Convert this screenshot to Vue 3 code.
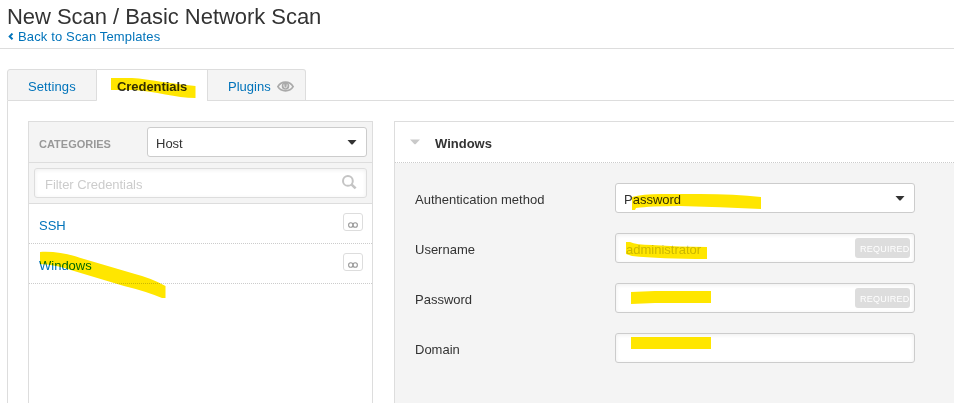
<script setup>
const categories = ['SSH', 'Windows']
const fields = [
  { label: 'Authentication method', value: 'Password', select: true },
  { label: 'Username', placeholder: 'administrator', required: true },
  { label: 'Password', required: true },
  { label: 'Domain' },
]
</script>

<template>
  <div class="page">
    <header class="header">
      <h1>New Scan / Basic Network Scan</h1>
      <a class="back">
        <svg width="6" height="8" viewBox="0 0 6 8"><path d="M4.5 0.6 L1.7 3.4 L4.5 6.2" fill="none" stroke="currentColor" stroke-width="2" /></svg>
        <span>Back to Scan Templates</span>
      </a>
    </header>

    <nav class="tabs">
      <a class="tab settings">Settings</a>
      <a class="tab active">Credentials</a>
      <a class="tab plugins">
        <span>Plugins</span>
        <svg width="18" height="12" viewBox="0 0 18 12">
          <path d="M0.9 5.6 C4.3 -0.3 12.7 -0.3 16.1 5.6 C12.7 11.2 4.3 11.2 0.9 5.6 Z" fill="none" stroke="#aaa" stroke-width="1.8" />
          <circle cx="8.5" cy="5" r="3.8" fill="#aaa" />
          <path d="M6.9 3.4V5A1.6 1.8 0 0 0 10.1 5V3.4" fill="none" stroke="#e8e8e8" stroke-width="1" />
        </svg>
      </a>
      <i class="tab-line"></i>
    </nav>

    <main class="content">
      <aside class="sidebar">
        <div class="side-head">
          <span class="side-title">CATEGORIES</span>
          <div class="control host">
            <span>Host</span>
            <svg class="caret" width="10" height="5" viewBox="0 0 10 5"><path d="M0.5 0H9.5L6 4Q5 5 4 4Z" fill="#333" /></svg>
          </div>
        </div>
        <div class="side-filter">
          <div class="control input filter">
            <span class="placeholder">Filter Credentials</span>
            <svg width="15" height="15" viewBox="0 0 15 15">
              <circle cx="5.9" cy="5.9" r="4.9" fill="none" stroke="#c4c4c4" stroke-width="2" />
              <path d="M9.4 9.4L13.6 13.4" stroke="#c4c4c4" stroke-width="2.6" />
            </svg>
          </div>
        </div>
        <div v-for="c in categories" :key="c" class="category">
          <a>{{ c }}</a>
          <span class="count">
            <svg width="10" height="6" viewBox="0 0 10 6">
              <g fill="none" stroke="#999" stroke-width="1.1"><ellipse cx="2.8" cy="3" rx="2.2" ry="2.3" /><ellipse cx="7.2" cy="3" rx="2.2" ry="2.3" /></g>
            </svg>
          </span>
        </div>
      </aside>

      <section class="details">
        <div class="details-head">
          <svg width="10" height="6" viewBox="0 0 10 6"><path d="M0 0.5H10L6 4.8Q5 5.8 4 4.8Z" fill="#c9c9c9" /></svg>
          <strong>Windows</strong>
        </div>
        <div class="form">
          <div v-for="f in fields" :key="f.label" class="row">
            <label>{{ f.label }}</label>
            <div class="control" :class="{ input: !f.select }">
              <span v-if="f.select">{{ f.value }}</span>
              <span v-else class="placeholder">{{ f.placeholder }}</span>
              <svg v-if="f.select" class="caret" width="10" height="5" viewBox="0 0 10 5"><path d="M0.5 0H9.5L6 4Q5 5 4 4Z" fill="#333" /></svg>
              <span v-if="f.required" class="required">REQUIRED</span>
            </div>
          </div>
        </div>
      </section>
    </main>

    <svg class="marks" width="954" height="403" viewBox="0 0 954 403">
      <g fill="#ffe600">
        <path d="M111 78 L132 78 C150 79 170 84 195.500 86 V98 C176 98 155 91 134 90 H111 Z" />
        <path d="M40 252 C57 251 72 255 84 259 L135 274 Q151 278 165.500 286 V298 H162 Q145 291 124 286 L74 271 Q58 265 40 264 Z" />
        <path d="M632 197 Q642 194 662 194 H700 Q735 194 761 197 V209 Q720 207 680 206 Q650 206 636 208 L635 210 H632 Z" />
        <path d="M626 242 H630 Q636 245 652 245 Q680 247 707 247 V259 Q660 259 632 256 L626 254 Z" />
        <path d="M631 292 L655 291 H711 V303 H655 L631 304 Z" />
        <path d="M631 337 H711 V349 H631 Z" />
      </g>
    </svg>
  </div>
</template>

<style>
body { margin: 0; overflow: hidden; background: #fff; }
</style>

<style scoped>
* { box-sizing: border-box; }
.page {
  position: relative;
  display: flex;
  flex-direction: column;
  width: 954px;
  height: 403px;
  overflow: hidden;
  background: #fff;
  color: #333;
  font: 13px/20px "Liberation Sans", Arial, sans-serif;
}
a { color: #0073ba; }
.header { height: 49px; padding: 5px 7px 0; border-bottom: 1px solid #ddd; }
h1 { margin: 0; font-size: 22px; line-height: 24px; font-weight: 400; letter-spacing: -0.04px; white-space: nowrap; }
.back { display: flex; align-items: center; gap: 4px; height: 18px; margin-top: -1px; padding-left: 1px; letter-spacing: 0.14px; }
.tabs { display: flex; height: 32px; margin: 20px 0 0 7px; }
.tab {
  height: 32px;
  padding-top: 7px;
  background: #f4f4f4;
  border: 1px solid #ddd;
  border-left: 0;
}
.settings { width: 90px; padding-left: 20px; border-left: 1px solid #ddd; border-radius: 3px 0 0 0; letter-spacing: 0.1px; }
.active { width: 111px; padding-left: 20px; background: #fff; border-bottom: 0; color: #333; font-weight: 700; letter-spacing: -0.05px; }
.plugins { display: flex; gap: 6px; width: 98px; padding-left: 20px; border-radius: 0 3px 0 0; }
.plugins svg { margin-top: 4px; }
.tab-line { flex: 1; border-bottom: 1px solid #ddd; }
.content {
  display: flex;
  flex: 1;
  gap: 21px;
  margin-left: 7px;
  padding: 20px 0 0 20px;
  border-left: 1px solid #ddd;
}
.sidebar { width: 345px; border: 1px solid #ddd; border-bottom: 0; }
.side-head, .side-filter { display: flex; align-items: center; height: 41px; background: #f4f4f4; border-bottom: 1px solid #ddd; }
.side-head { justify-content: space-between; padding: 0 5px 0 10px; }
.side-title { padding-top: 4px; color: #999; font-size: 11px; font-weight: 700; }
.control {
  display: flex;
  align-items: center;
  justify-content: space-between;
  width: 300px;
  height: 30px;
  padding: 3px 9px 0 8px;
  background: #fff;
  border: 1px solid #ccc;
  border-radius: 3px;
}
.caret { margin-bottom: 3px; }
.input { padding: 3px 4px 0 10px; box-shadow: inset 0 1px 4px rgba(0, 0, 0, 0.07); }
.control.host { width: 220px; }
.side-filter { padding: 0 5px; }
.control.filter { width: 333px; padding-right: 9px; border-color: #ddd; }
.filter svg { margin-bottom: 4px; }
.placeholder { color: #ccc; }
.filter .placeholder { letter-spacing: -0.05px; }
.category { display: flex; justify-content: space-between; height: 40px; padding: 9px 9px 0 10px; border-bottom: 1px dotted #ccc; }
.category a { padding-top: 3px; }
.count { display: flex; align-items: flex-end; justify-content: center; width: 20px; height: 18px; padding-bottom: 2px; border: 1px solid #ddd; border-radius: 3px; }
.details { display: flex; flex: 1; flex-direction: column; border-top: 1px solid #ddd; border-left: 1px solid #ddd; }
.details-head { display: flex; align-items: center; gap: 15px; height: 41px; padding: 3px 0 0 15px; border-bottom: 1px dotted #ccc; }
.details-head svg { margin-bottom: 3px; }
.form { display: flex; flex: 1; flex-direction: column; gap: 20px; padding: 20px; background: #f4f4f4; }
.row { display: flex; height: 30px; }
label { width: 200px; padding-top: 7px; }
.required {
  width: 55px;
  height: 20px;
  margin-bottom: 3px;
  padding-left: 5px;
  background: #ddd;
  border-radius: 3px;
  color: #fff;
  font-size: 9px;
  letter-spacing: 0.25px;
  line-height: 22px;
}
.marks { position: absolute; inset: 0; mix-blend-mode: multiply; pointer-events: none; }
</style>
